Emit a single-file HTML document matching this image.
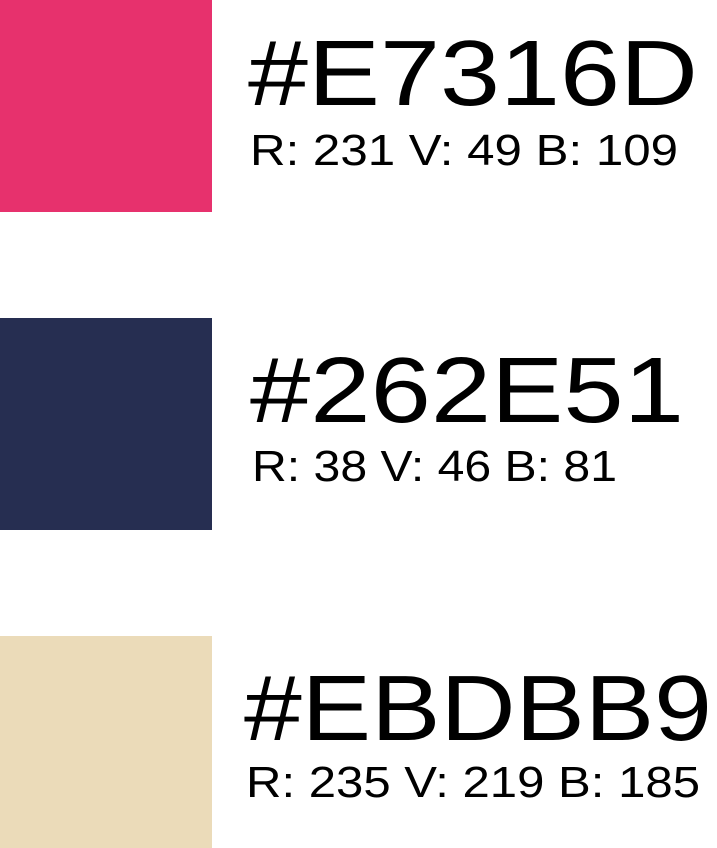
<!DOCTYPE html>
<html><head><meta charset="utf-8"><style>
html,body{margin:0;padding:0;background:#fff;width:717px;height:848px;overflow:hidden}
svg{display:block}
text{font-family:"Liberation Sans",sans-serif;fill:#000}
</style></head><body>
<svg width="717" height="848" viewBox="0 0 717 848">
<rect x="0" y="0" width="212" height="212" fill="#E7316D"/>
<rect x="0" y="318" width="212" height="212" fill="#262E51"/>
<rect x="0" y="636" width="212" height="212" fill="#EBDBB9"/>
<text x="248" y="105" font-size="93" textLength="450" lengthAdjust="spacingAndGlyphs">#E7316D</text>
<text x="250" y="165" font-size="44" textLength="428" lengthAdjust="spacingAndGlyphs">R: 231 V: 49 B: 109</text>
<text x="250" y="422" font-size="93" textLength="434" lengthAdjust="spacingAndGlyphs">#262E51</text>
<text x="252" y="481" font-size="44" textLength="365" lengthAdjust="spacingAndGlyphs">R: 38 V: 46 B: 81</text>
<text x="244" y="740" font-size="93" textLength="468" lengthAdjust="spacingAndGlyphs">#EBDBB9</text>
<text x="246" y="797" font-size="44" textLength="454" lengthAdjust="spacingAndGlyphs">R: 235 V: 219 B: 185</text>
</svg>
</body></html>
